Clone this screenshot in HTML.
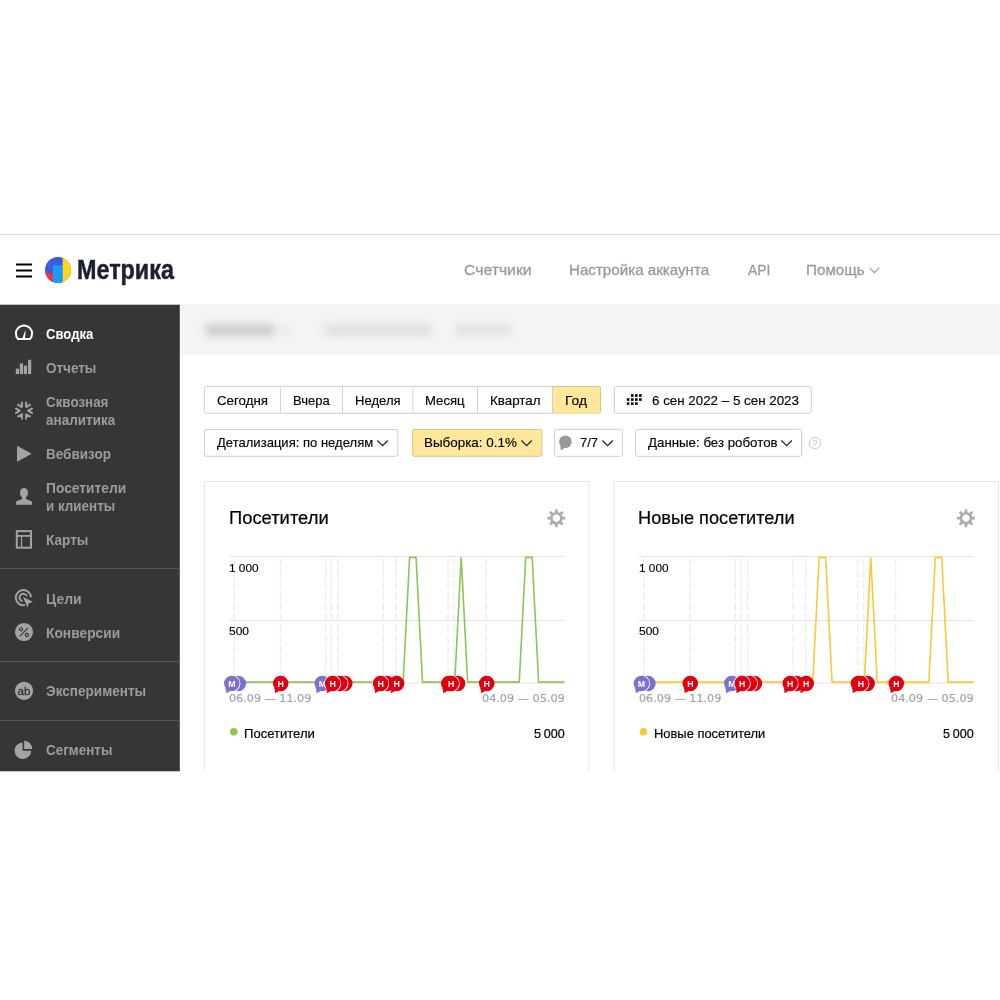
<!DOCTYPE html>
<html lang="ru">
<head>
<meta charset="utf-8">
<title>Метрика — Сводка</title>
<style>
*{box-sizing:border-box;margin:0;padding:0}
html,body{width:1000px;height:1000px;background:#fff;overflow:hidden}
body{font-family:"Liberation Sans",sans-serif;color:#000;position:relative}
#app{position:absolute;left:0;top:234px;width:1000px;height:539px;overflow:hidden;background:#fff}
header,nav,aside,main,section,ul,li,a,.w{display:block;position:static;list-style:none;text-decoration:none;color:inherit}
h2{font-weight:normal}
i{font-style:normal}
#fade{position:absolute;left:0;top:537px;width:1000px;height:3px;background:#fff;z-index:9;transform:translateY(0.3px)}
#topline{position:absolute;left:0;top:0;width:1000px;height:1px;background:#dedede}
#logo{position:absolute;left:45px;top:22.7px;width:26px;height:26px}
#side{position:absolute;background:#363636;transform-origin:0 0}
.sep{position:absolute;left:0;width:180px;height:1px;background:#595959}
#bar{position:absolute;background:#f5f4f2;transform-origin:0 0}
.blur{position:absolute;filter:blur(4.5px);border-radius:5px}
.btn{position:absolute;display:block;border:1px solid #cfcfcf;background:#fff;transform-origin:0 0}
.btn.y{background:#ffe79c;border-color:#dcc580}
.card{position:absolute;border:1px solid #e5e5e5;background:#fff;transform-origin:0 0}
.t{position:absolute;white-space:nowrap;transform-origin:0 0;display:block;line-height:normal}
.brand{font-weight:bold;font-size:27.5px;color:#1b2033;-webkit-text-stroke:0.5px #1b2033}
.nav{font-size:15px;color:#999;-webkit-text-stroke:0.3px #999}
.si{font-weight:bold;font-size:15.2px;color:#9c9c9c}
.si.on{color:#fff}
.bt{font-size:13.3px;color:#000;-webkit-text-stroke:0.15px #000}
.ctitle{font-size:17.6px;color:#000;-webkit-text-stroke:0.2px #000}
.ax{font-family:"DejaVu Sans","Liberation Sans",sans-serif;font-size:11px;color:#a4a4a4;-webkit-text-stroke:0.2px #a4a4a4}
.yl{font-size:11.3px;color:#000;-webkit-text-stroke:0.15px #000}
.lg{font-size:13.2px;color:#000;-webkit-text-stroke:0.2px #000}
.num{font-size:12.8px;color:#000;word-spacing:-0.8px;-webkit-text-stroke:0.2px #000}
.mk{font-weight:bold;font-size:8.8px;fill:#fff;font-family:"Liberation Sans",sans-serif}
svg{position:absolute;overflow:visible;will-change:transform}
</style>
</head>
<body>
<div id="app">
<header>
<div id="topline"></div>
<svg id="burger" style="left:16px;top:28px" width="16" height="16" viewBox="0 0 16 16"><path d="M0 2.5 H16 M0 8.5 H16 M0 14.5 H16" stroke="#000" stroke-width="1.9" fill="none"/></svg>
<a class="w"><svg id="logo" viewBox="0 0 26 26"><defs><clipPath id="lc"><circle cx="13" cy="13" r="13"/></clipPath></defs><g clip-path="url(#lc)"><rect width="26" height="26" fill="#3d5bdc"/><rect x="0" y="16.3" width="8" height="10" fill="#f5333f"/><rect x="8" y="8.3" width="10" height="18" fill="#1a9cff"/><rect x="17.7" y="0" width="9" height="26" fill="#ffd51e"/></g></svg><span class="t brand" style="left:77.04px;top:20px;transform:scaleX(0.8496)">Метрика</span></a>
<nav class="w">
<a class="w"><span class="t nav" style="left:463.71px;top:27px;transform:scaleX(1.0507)">Счетчики</span></a>
<a class="w"><span class="t nav" style="left:569.3px;top:27px;transform:scaleX(1.0098)">Настройка аккаунта</span></a>
<a class="w"><span class="t nav" style="left:748px;top:27px;transform:scaleX(0.9202)">API</span></a>
<a class="w"><span class="t nav" style="left:805.8px;top:27px;transform:scaleX(1.0146)">Помощь</span><svg class="chev" style="left:869px;top:33px" width="11" height="7" viewBox="0 0 11 7"><path d="M0.6 0.8 L5.4 5.6 L10.2 0.8" fill="none" stroke="#999" stroke-width="1.1"/></svg></a>
</nav>
</header>
<aside>
<div id="side" style="left:0;top:70px;width:180px;height:470px;transform:translate(-0.2px,0.7px)"><div class="sep" style="top:264px;transform:translateY(-0.6px)"></div><div class="sep" style="top:357px;transform:translateY(-0.8px)"></div><div class="sep" style="top:416px;transform:translateY(-0.6px)"></div></div>
<ul class="w">
<li class="w"><a class="w"><svg class="ico" style="left:0;top:0" width="40" height="540" viewBox="0 234 40 540"><path d="M18 339.1 A8.1 8.1 0 1 1 30 339.1 Z" fill="none" stroke="#fff" stroke-width="2" stroke-linejoin="round"/><path d="M22.2 338.6 L25.7 329.6 L25 338.6 Z" fill="#fff"/></svg><span class="t si on" style="left:46.01px;top:91px;transform:scaleX(0.8630)">Сводка</span></a></li>
<li class="w"><a class="w"><svg class="ico" style="left:0;top:0" width="40" height="540" viewBox="0 234 40 540"><g fill="#a3a3a3"><rect x="15.8" y="368.6" width="3.2" height="5.5"/><rect x="19.8" y="363.4" width="3.2" height="10.7"/><rect x="23.8" y="365.6" width="3.2" height="8.5"/><rect x="28" y="359.8" width="3.2" height="14.3"/></g></svg><span class="t si" style="left:46px;top:125px;transform:scaleX(0.8883)">Отчеты</span></a></li>
<li class="w"><a class="w"><svg class="ico" style="left:0;top:0" width="40" height="540" viewBox="0 234 40 540"><g transform="translate(24 410.7)" fill="none" stroke="#a3a3a3" stroke-width="2" stroke-linejoin="round"><path d="M8.7 -2.6 L4.2 0 L8.7 2.6 M6.6 6.24 L2.1 3.64 L2.1 8.84 M-2.1 8.84 L-2.1 3.64 L-6.6 6.24 M-8.7 2.6 L-4.2 0 L-8.7 -2.6 M-6.6 -6.24 L-2.1 -3.64 L-2.1 -8.84 M2.1 -8.84 L2.1 -3.64 L6.6 -6.24"/></g></svg><span class="t si" style="left:46px;top:159px;transform:scaleX(0.8809)">Сквозная</span><span class="t si" style="left:46.11px;top:177px;transform:scaleX(0.8891)">аналитика</span></a></li>
<li class="w"><a class="w"><svg class="ico" style="left:0;top:0" width="40" height="540" viewBox="0 234 40 540"><path d="M17 445.7 L31.8 453.7 L17 461.7 Z" fill="#a3a3a3"/></svg><span class="t si" style="left:45.61px;top:210.8px;transform:scaleX(0.8901)">Вебвизор</span></a></li>
<li class="w"><a class="w"><svg class="ico" style="left:0;top:0" width="40" height="540" viewBox="0 234 40 540"><g fill="#a3a3a3"><ellipse cx="24" cy="492.8" rx="4" ry="4.9"/><path d="M15.8 504.7 L15.8 503 Q15.8 500.6 19.5 499.9 L22 499.2 L22 496 L26 496 L26 499.2 L28.5 499.9 Q32.2 500.6 32.2 503 L32.2 504.7 Z"/></g></svg><span class="t si" style="left:45.59px;top:244.6px;transform:scaleX(0.9078)">Посетители</span><span class="t si" style="left:45.62px;top:262.6px;transform:scaleX(0.8825)">и клиенты</span></a></li>
<li class="w"><a class="w"><svg class="ico" style="left:0;top:0" width="40" height="540" viewBox="0 234 40 540"><g fill="none" stroke="#a3a3a3"><rect x="16.8" y="531.1" width="14.2" height="16.6" stroke-width="2"/><path d="M17 535.9 H31" stroke-width="1.8"/><path d="M21.5 536 V547" stroke-width="1.2"/></g></svg><span class="t si" style="left:45.61px;top:296.6px;transform:scaleX(0.8947)">Карты</span></a></li>
<li class="w"><a class="w"><svg class="ico" style="left:0;top:0" width="40" height="540" viewBox="0 234 40 540"><path d="M22.9 597 L33 601.8 L28.7 603.5 L27.6 607.6 Z" fill="#a3a3a3"/><g fill="none" stroke="#a3a3a3"><path d="M31 597.4 A7.6 7.6 0 1 0 25 605.1" stroke-width="2"/><path d="M26.9 596.2 A3.8 3.8 0 1 0 22.6 601.3" stroke-width="1.9"/></g></svg><span class="t si" style="left:45.58px;top:355.6px;transform:scaleX(0.9208)">Цели</span></a></li>
<li class="w"><a class="w"><svg class="ico" style="left:0;top:0" width="40" height="540" viewBox="0 234 40 540"><circle cx="24" cy="632" r="9.1" fill="#a3a3a3"/><g fill="none" stroke="#363636" stroke-width="1.1"><circle cx="21" cy="629.3" r="1.6"/><circle cx="26.9" cy="635" r="1.6"/><path d="M28 627.9 L19.7 636.4"/></g></svg><span class="t si" style="left:45.59px;top:389.6px;transform:scaleX(0.9080)">Конверсии</span></a></li>
<li class="w"><a class="w"><svg class="ico" style="left:0;top:0" width="40" height="540" viewBox="0 234 40 540"><circle cx="24" cy="690.8" r="9.1" fill="#a3a3a3"/><text x="24" y="694.6" text-anchor="middle" font-family="'Liberation Sans',sans-serif" font-size="11.5" fill="#363636" stroke="#363636" stroke-width="0.3" textLength="13" lengthAdjust="spacingAndGlyphs">ab</text></svg><span class="t si" style="left:46.16px;top:448px;transform:scaleX(0.8934)">Эксперименты</span></a></li>
<li class="w"><a class="w"><svg class="ico" style="left:0;top:0" width="40" height="540" viewBox="0 234 40 540"><g fill="#a3a3a3"><path d="M22.6 750.7 L22.6 742.45 A8.3 8.3 0 1 0 31.2 750.7 Z"/><path d="M24.1 749 L24.1 740.8 A8.2 8.2 0 0 1 32.3 749 Z"/></g></svg><span class="t si" style="left:46px;top:507px;transform:scaleX(0.8849)">Сегменты</span></a></li>
</ul>
</aside>
<main>
<div id="bar" style="left:180px;top:70px;width:820px;height:51px;transform:translate(0.6px,0.4px)"></div>
<div class="blur" style="left:205px;top:90px;width:70px;height:12px;background:#cccbc9"></div>
<div class="blur" style="left:283px;top:93px;width:7px;height:5px;background:#d6d5d3"></div>
<div class="blur" style="left:324px;top:91px;width:108px;height:10px;background:#dddcda"></div>
<div class="blur" style="left:454px;top:91px;width:58px;height:10px;background:#e0dfdd"></div>
<div class="w toolbar">
<div class="w" role="group">
<div class="w" role="button"><i class="btn" style="left:203px;top:151px;width:77px;height:28px;transform:translate(0.9px,0.9px) scale(1.0000,0.9964);border-radius:2.5px 0 0 2.5px;"></i><span class="t bt" style="left:216.87px;top:159px;transform:scaleX(1.0009)">Сегодня</span></div>
<div class="w" role="button"><i class="btn" style="left:280px;top:151px;width:62px;height:28px;transform:translate(0.9px,0.9px) scale(1.0032,0.9964);border-radius:0;border-left:0;"></i><span class="t bt" style="left:292.71px;top:159px;transform:scaleX(0.9787)">Вчера</span></div>
<div class="w" role="button"><i class="btn" style="left:343px;top:151px;width:70px;height:28px;transform:translate(0.1px,0.9px) scale(1.0057,0.9964);border-radius:0;border-left:0;"></i><span class="t bt" style="left:355.2px;top:159px;transform:scaleX(0.9846)">Неделя</span></div>
<div class="w" role="button"><i class="btn" style="left:413px;top:151px;width:64px;height:28px;transform:translate(0.5px,0.9px) scale(1.0078,0.9964);border-radius:0;border-left:0;"></i><span class="t bt" style="left:425.2px;top:159px;transform:scaleX(0.9877)">Месяц</span></div>
<div class="w" role="button"><i class="btn" style="left:478px;top:151px;width:75px;height:28px;transform:translate(0px,0.9px) scale(1.0000,0.9964);border-radius:0;border-left:0;"></i><span class="t bt" style="left:489.93px;top:159px;transform:scaleX(1.0038)">Квартал</span></div>
<div class="w" role="button"><i class="btn y" style="left:553px;top:151px;width:48px;height:28px;transform:translate(0px,0.9px) scale(1.0000,0.9964);border-radius:0 2.5px 2.5px 0;border-left:0;"></i><span class="t bt" style="left:565.14px;top:159px;transform:scaleX(1.0418)">Год</span></div>
</div>
<div class="w" role="button"><i class="btn" style="left:614px;top:151px;width:198px;height:28px;transform:translate(0px,0.9px) scale(0.9990,0.9964);border-radius:2.5px;"></i><svg style="left:0;top:0" width="1000" height="540" viewBox="0 234 1000 540"><g fill="#000"><rect x="630.95" y="394.2" width="2.6" height="2.6"/><rect x="635" y="394.2" width="2.6" height="2.6"/><rect x="639.1" y="394.2" width="2.6" height="2.6"/><rect x="626.8" y="398.25" width="2.6" height="2.6"/><rect x="630.95" y="398.25" width="2.6" height="2.6"/><rect x="635" y="398.25" width="2.6" height="2.6"/><rect x="639.1" y="398.25" width="2.6" height="2.6"/><rect x="626.8" y="402.3" width="2.6" height="2.6"/><rect x="630.95" y="402.3" width="2.6" height="2.6"/><rect x="635" y="402.3" width="2.6" height="2.6"/></g></svg><span class="t bt" style="left:651.87px;top:159px;transform:scaleX(1.0044)">6 сен 2022 – 5 сен 2023</span></div>
<div class="w" role="button"><i class="btn" style="left:203px;top:194px;width:194px;height:28px;transform:translate(0.9px,0.9px) scale(1.0021,0.9964);border-radius:2.5px;"></i><svg class="chev" style="left:377.1px;top:205.9px" width="12" height="7" viewBox="0 0 12 7"><path d="M0.4 0.5 L5.6 5.7 L10.8 0.5" fill="none" stroke="#222" stroke-width="1.25"/></svg><span class="t bt" style="left:217.44px;top:201.4px;transform:scaleX(0.9812)">Детализация: по неделям</span></div>
<div class="w" role="button"><i class="btn y" style="left:412px;top:194px;width:130px;height:28px;transform:translate(0.2px,0.9px) scale(1.0008,0.9964);border-radius:2.5px;"></i><svg class="chev" style="left:521.3px;top:205.9px" width="12" height="7" viewBox="0 0 12 7"><path d="M0.4 0.5 L5.6 5.7 L10.8 0.5" fill="none" stroke="#222" stroke-width="1.25"/></svg><span class="t bt" style="left:424.43px;top:201.4px;transform:scaleX(1.0084)">Выборка: 0.1%</span></div>
<div class="w" role="button"><i class="btn" style="left:554px;top:194px;width:69px;height:28px;transform:translate(0.1px,0.9px) scale(0.9971,0.9964);border-radius:2.5px;"></i><svg style="left:0;top:0" width="1000" height="540" viewBox="0 234 1000 540"><circle cx="565.4" cy="441.8" r="6.3" fill="#999"/><path d="M560.2 445.2 Q561 448 560.4 450.2 Q563 449.6 565.2 447.6 Z" fill="#999"/></svg><svg class="chev" style="left:602.1px;top:205.9px" width="12" height="7" viewBox="0 0 12 7"><path d="M0.4 0.5 L5.6 5.7 L10.8 0.5" fill="none" stroke="#222" stroke-width="1.25"/></svg><span class="t bt" style="left:579.9px;top:201.4px;transform:scaleX(0.9642)">7/7</span></div>
<div class="w" role="button"><i class="btn" style="left:635px;top:194px;width:167px;height:28px;transform:translate(0px,0.9px) scale(1.0000,0.9964);border-radius:2.5px;"></i><svg class="chev" style="left:780.8px;top:205.9px" width="12" height="7" viewBox="0 0 12 7"><path d="M0.4 0.5 L5.6 5.7 L10.8 0.5" fill="none" stroke="#222" stroke-width="1.25"/></svg><span class="t bt" style="left:648.44px;top:201.4px;transform:scaleX(0.9992)">Данные: без роботов</span></div>
<svg class="help" style="left:0;top:0" width="1000" height="540" viewBox="0 234 1000 540"><circle cx="815" cy="443" r="5.6" fill="none" stroke="#ccc" stroke-width="1"/><text x="815" y="446.2" text-anchor="middle" font-family="'Liberation Sans',sans-serif" font-size="9" fill="#bbb">?</text></svg>
</div>
<section class="w">
<div class="card" style="left:203px;top:247px;width:386px;height:300px;transform:translate(0.9px,0px) scale(0.9987,1.0000);"></div>
<h2 class="t ctitle" style="left:229.06px;top:273.6px;transform:scaleX(1.0441)">Посетители</h2>
<svg class="gear" style="left:0;top:0" width="1000" height="540" viewBox="0 234 1000 540"><g transform="translate(556.4 518.2)"><circle r="5" fill="none" stroke="#adadad" stroke-width="2.6"/><g fill="#adadad"><rect x="-1.35" y="-9" width="2.7" height="4" rx="0.5" transform="rotate(0)"/><rect x="-1.35" y="-9" width="2.7" height="4" rx="0.5" transform="rotate(45)"/><rect x="-1.35" y="-9" width="2.7" height="4" rx="0.5" transform="rotate(90)"/><rect x="-1.35" y="-9" width="2.7" height="4" rx="0.5" transform="rotate(135)"/><rect x="-1.35" y="-9" width="2.7" height="4" rx="0.5" transform="rotate(180)"/><rect x="-1.35" y="-9" width="2.7" height="4" rx="0.5" transform="rotate(225)"/><rect x="-1.35" y="-9" width="2.7" height="4" rx="0.5" transform="rotate(270)"/><rect x="-1.35" y="-9" width="2.7" height="4" rx="0.5" transform="rotate(315)"/></g></g></svg>
<svg class="chart" style="left:0;top:0" width="1000" height="540" viewBox="0 234 1000 540"><g stroke="#e3e3e3" stroke-width="1" fill="none"><path d="M229 556.4 H564.4"/><path d="M229 620.4 H564.4"/><path d="M229 683.1 H564.4"/></g><g stroke="#eeeeee" stroke-width="1.5" stroke-dasharray="8.4 2.6" fill="none"><path d="M234.2 558.2 V683"/><path d="M280.5 558.2 V683"/><path d="M325.6 558.2 V683"/><path d="M331.4 558.2 V683"/><path d="M338 558.2 V683"/><path d="M383.3 558.2 V683"/><path d="M396 558.2 V683"/><path d="M448 558.2 V683"/><path d="M454 558.2 V683"/><path d="M486 558.2 V683"/></g><polyline points="229,682.1 235.45,682.1 241.9,682.1 248.35,682.1 254.8,682.1 261.25,682.1 267.7,682.1 274.15,682.1 280.6,682.1 287.05,682.1 293.5,682.1 299.95,682.1 306.4,682.1 312.85,682.1 319.3,682.1 325.75,682.1 332.2,682.1 338.65,682.1 345.1,682.1 351.55,682.1 358,682.1 364.45,682.1 370.9,682.1 377.35,682.1 383.8,682.1 390.25,682.1 396.7,682.1 403.15,682.1 409.6,557.4 416.05,557.4 422.5,682.1 428.95,682.1 435.4,682.1 441.85,682.1 448.3,682.1 454.75,682.1 461.2,557.4 467.65,682.1 474.1,682.1 480.55,682.1 487,682.1 493.45,682.1 499.9,682.1 506.35,682.1 512.8,682.1 519.25,682.1 525.7,557.4 532.15,557.4 538.6,682.1 545.05,682.1 551.5,682.1 557.95,682.1 564.4,682.1" fill="none" stroke="#8fc556" stroke-width="1.6" stroke-linejoin="miter"/><circle cx="238.3" cy="683.5" r="7.75" fill="#7c6fd0"/><circle cx="231.8" cy="683.5" r="8.6" fill="#fff"/><path d="M225.2 687.5 Q226.5 690.9 225.9 693 Q228.2 692.1 230.2 690.9 Z" fill="#7c6fd0"/><circle cx="231.8" cy="683.5" r="7.75" fill="#7c6fd0"/><text class="mk" x="231.9" y="687.4" text-anchor="middle">М</text><path d="M274.1 687.5 Q275.4 690.9 274.8 693 Q277.1 692.1 279.1 690.9 Z" fill="#e0000f"/><circle cx="280.7" cy="683.5" r="7.75" fill="#e0000f"/><text class="mk" x="280.8" y="687.4" text-anchor="middle">Н</text><path d="M315.6 687.5 Q316.9 690.9 316.3 693 Q318.6 692.1 320.6 690.9 Z" fill="#7c6fd0"/><circle cx="322.2" cy="683.5" r="7.75" fill="#7c6fd0"/><text class="mk" x="322.3" y="687.4" text-anchor="middle">М</text><circle cx="344.8" cy="683.5" r="7.75" fill="#e0000f"/><circle cx="339.8" cy="683.5" r="8.6" fill="#fff"/><circle cx="339.8" cy="683.5" r="7.75" fill="#e0000f"/><circle cx="332.6" cy="683.5" r="8.6" fill="#fff"/><path d="M326 687.5 Q327.3 690.9 326.7 693 Q329 692.1 331 690.9 Z" fill="#e0000f"/><circle cx="332.6" cy="683.5" r="7.75" fill="#e0000f"/><text class="mk" x="332.7" y="687.4" text-anchor="middle">Н</text><circle cx="386.8" cy="683.5" r="7.75" fill="#e0000f"/><circle cx="380.6" cy="683.5" r="8.6" fill="#fff"/><path d="M374 687.5 Q375.3 690.9 374.7 693 Q377 692.1 379 690.9 Z" fill="#e0000f"/><circle cx="380.6" cy="683.5" r="7.75" fill="#e0000f"/><text class="mk" x="380.7" y="687.4" text-anchor="middle">Н</text><path d="M390 687.5 Q391.3 690.9 390.7 693 Q393 692.1 395 690.9 Z" fill="#e0000f"/><circle cx="396.6" cy="683.5" r="7.75" fill="#e0000f"/><text class="mk" x="396.7" y="687.4" text-anchor="middle">Н</text><circle cx="457.6" cy="683.5" r="7.75" fill="#e0000f"/><path d="M442.2 687.5 Q443.5 690.9 442.9 693 Q445.2 692.1 447.2 690.9 Z" fill="#e0000f"/><circle cx="448.8" cy="683.5" r="7.75" fill="#e0000f"/><path d="M451.2 674.9 a8.6 8.6 0 0 1 0 17.2 Z" fill="#fff"/><circle cx="451.2" cy="683.5" r="7.75" fill="#e0000f"/><text class="mk" x="451.3" y="687.4" text-anchor="middle">Н</text><path d="M480.1 687.5 Q481.4 690.9 480.8 693 Q483.1 692.1 485.1 690.9 Z" fill="#e0000f"/><circle cx="486.7" cy="683.5" r="7.75" fill="#e0000f"/><text class="mk" x="486.8" y="687.4" text-anchor="middle">Н</text></svg>
<span class="t yl" style="left:228.95px;top:328px;transform:scaleX(1.0460)">1 000</span>
<span class="t yl" style="left:229.34px;top:391px;transform:scaleX(1.0607)">500</span>
<span class="t ax" style="left:228.9px;top:457.7px;transform:scaleX(1.0171)">06.09 — 11.09</span>
<span class="t ax" style="left:481.8px;top:457.7px;transform:scaleX(1.0209)">04.09 — 05.09</span>
<div class="w legend"><svg class="dot" style="left:0;top:0" width="1000" height="540" viewBox="0 234 1000 540"><circle cx="233.8" cy="731.8" r="3.8" fill="#8fc556"/></svg><span class="t lg" style="left:243.95px;top:492.4px;transform:scaleX(0.9901)">Посетители</span><span class="t num" style="left:533.51px;top:492.4px;transform:scaleX(0.9822)">5 000</span></div>
</section>
<section class="w">
<div class="card" style="left:613px;top:247px;width:386px;height:300px;transform:translate(0.5px,0px) scale(0.9987,1.0000);"></div>
<h2 class="t ctitle" style="left:638.28px;top:273.6px;transform:scaleX(1.0332)">Новые посетители</h2>
<svg class="gear" style="left:0;top:0" width="1000" height="540" viewBox="0 234 1000 540"><g transform="translate(966 518.2)"><circle r="5" fill="none" stroke="#adadad" stroke-width="2.6"/><g fill="#adadad"><rect x="-1.35" y="-9" width="2.7" height="4" rx="0.5" transform="rotate(0)"/><rect x="-1.35" y="-9" width="2.7" height="4" rx="0.5" transform="rotate(45)"/><rect x="-1.35" y="-9" width="2.7" height="4" rx="0.5" transform="rotate(90)"/><rect x="-1.35" y="-9" width="2.7" height="4" rx="0.5" transform="rotate(135)"/><rect x="-1.35" y="-9" width="2.7" height="4" rx="0.5" transform="rotate(180)"/><rect x="-1.35" y="-9" width="2.7" height="4" rx="0.5" transform="rotate(225)"/><rect x="-1.35" y="-9" width="2.7" height="4" rx="0.5" transform="rotate(270)"/><rect x="-1.35" y="-9" width="2.7" height="4" rx="0.5" transform="rotate(315)"/></g></g></svg>
<svg class="chart" style="left:0;top:0" width="1000" height="540" viewBox="0 234 1000 540"><g stroke="#e3e3e3" stroke-width="1" fill="none"><path d="M638.6 556.4 H974"/><path d="M638.6 620.4 H974"/><path d="M638.6 683.1 H974"/></g><g stroke="#eeeeee" stroke-width="1.5" stroke-dasharray="8.4 2.6" fill="none"><path d="M643.8 558.2 V683"/><path d="M690.1 558.2 V683"/><path d="M735.2 558.2 V683"/><path d="M741 558.2 V683"/><path d="M747.6 558.2 V683"/><path d="M792.9 558.2 V683"/><path d="M805.6 558.2 V683"/><path d="M857.6 558.2 V683"/><path d="M863.6 558.2 V683"/><path d="M895.6 558.2 V683"/></g><polyline points="638.6,682.1 645.05,682.1 651.5,682.1 657.95,682.1 664.4,682.1 670.85,682.1 677.3,682.1 683.75,682.1 690.2,682.1 696.65,682.1 703.1,682.1 709.55,682.1 716,682.1 722.45,682.1 728.9,682.1 735.35,682.1 741.8,682.1 748.25,682.1 754.7,682.1 761.15,682.1 767.6,682.1 774.05,682.1 780.5,682.1 786.95,682.1 793.4,682.1 799.85,682.1 806.3,682.1 812.75,682.1 819.2,557.4 825.65,557.4 832.1,682.1 838.55,682.1 845,682.1 851.45,682.1 857.9,682.1 864.35,682.1 870.8,557.4 877.25,682.1 883.7,682.1 890.15,682.1 896.6,682.1 903.05,682.1 909.5,682.1 915.95,682.1 922.4,682.1 928.85,682.1 935.3,557.4 941.75,557.4 948.2,682.1 954.65,682.1 961.1,682.1 967.55,682.1 974,682.1" fill="none" stroke="#fbc937" stroke-width="1.6" stroke-linejoin="miter"/><circle cx="647.9" cy="683.5" r="7.75" fill="#7c6fd0"/><circle cx="641.4" cy="683.5" r="8.6" fill="#fff"/><path d="M634.8 687.5 Q636.1 690.9 635.5 693 Q637.8 692.1 639.8 690.9 Z" fill="#7c6fd0"/><circle cx="641.4" cy="683.5" r="7.75" fill="#7c6fd0"/><text class="mk" x="641.5" y="687.4" text-anchor="middle">М</text><path d="M683.7 687.5 Q685 690.9 684.4 693 Q686.7 692.1 688.7 690.9 Z" fill="#e0000f"/><circle cx="690.3" cy="683.5" r="7.75" fill="#e0000f"/><text class="mk" x="690.4" y="687.4" text-anchor="middle">Н</text><path d="M725.2 687.5 Q726.5 690.9 725.9 693 Q728.2 692.1 730.2 690.9 Z" fill="#7c6fd0"/><circle cx="731.8" cy="683.5" r="7.75" fill="#7c6fd0"/><text class="mk" x="731.9" y="687.4" text-anchor="middle">М</text><circle cx="754.4" cy="683.5" r="7.75" fill="#e0000f"/><circle cx="749.4" cy="683.5" r="8.6" fill="#fff"/><circle cx="749.4" cy="683.5" r="7.75" fill="#e0000f"/><circle cx="742.2" cy="683.5" r="8.6" fill="#fff"/><path d="M735.6 687.5 Q736.9 690.9 736.3 693 Q738.6 692.1 740.6 690.9 Z" fill="#e0000f"/><circle cx="742.2" cy="683.5" r="7.75" fill="#e0000f"/><text class="mk" x="742.3" y="687.4" text-anchor="middle">Н</text><circle cx="796.4" cy="683.5" r="7.75" fill="#e0000f"/><circle cx="790.2" cy="683.5" r="8.6" fill="#fff"/><path d="M783.6 687.5 Q784.9 690.9 784.3 693 Q786.6 692.1 788.6 690.9 Z" fill="#e0000f"/><circle cx="790.2" cy="683.5" r="7.75" fill="#e0000f"/><text class="mk" x="790.3" y="687.4" text-anchor="middle">Н</text><path d="M799.6 687.5 Q800.9 690.9 800.3 693 Q802.6 692.1 804.6 690.9 Z" fill="#e0000f"/><circle cx="806.2" cy="683.5" r="7.75" fill="#e0000f"/><text class="mk" x="806.3" y="687.4" text-anchor="middle">Н</text><circle cx="867.2" cy="683.5" r="7.75" fill="#e0000f"/><path d="M851.8 687.5 Q853.1 690.9 852.5 693 Q854.8 692.1 856.8 690.9 Z" fill="#e0000f"/><circle cx="858.4" cy="683.5" r="7.75" fill="#e0000f"/><path d="M860.8 674.9 a8.6 8.6 0 0 1 0 17.2 Z" fill="#fff"/><circle cx="860.8" cy="683.5" r="7.75" fill="#e0000f"/><text class="mk" x="860.9" y="687.4" text-anchor="middle">Н</text><path d="M889.7 687.5 Q891 690.9 890.4 693 Q892.7 692.1 894.7 690.9 Z" fill="#e0000f"/><circle cx="896.3" cy="683.5" r="7.75" fill="#e0000f"/><text class="mk" x="896.4" y="687.4" text-anchor="middle">Н</text></svg>
<span class="t yl" style="left:638.55px;top:328px;transform:scaleX(1.0460)">1 000</span>
<span class="t yl" style="left:638.94px;top:391px;transform:scaleX(1.0607)">500</span>
<span class="t ax" style="left:638.5px;top:457.7px;transform:scaleX(1.0171)">06.09 — 11.09</span>
<span class="t ax" style="left:891.4px;top:457.7px;transform:scaleX(1.0209)">04.09 — 05.09</span>
<div class="w legend"><svg class="dot" style="left:0;top:0" width="1000" height="540" viewBox="0 234 1000 540"><circle cx="643.4" cy="731.8" r="3.8" fill="#fbc937"/></svg><span class="t lg" style="left:653.56px;top:492.4px;transform:scaleX(0.9792)">Новые посетители</span><span class="t num" style="left:943.11px;top:492.4px;transform:scaleX(0.9822)">5 000</span></div>
</section>
</main>
<div id="fade"></div>
</div>
</body>
</html>
